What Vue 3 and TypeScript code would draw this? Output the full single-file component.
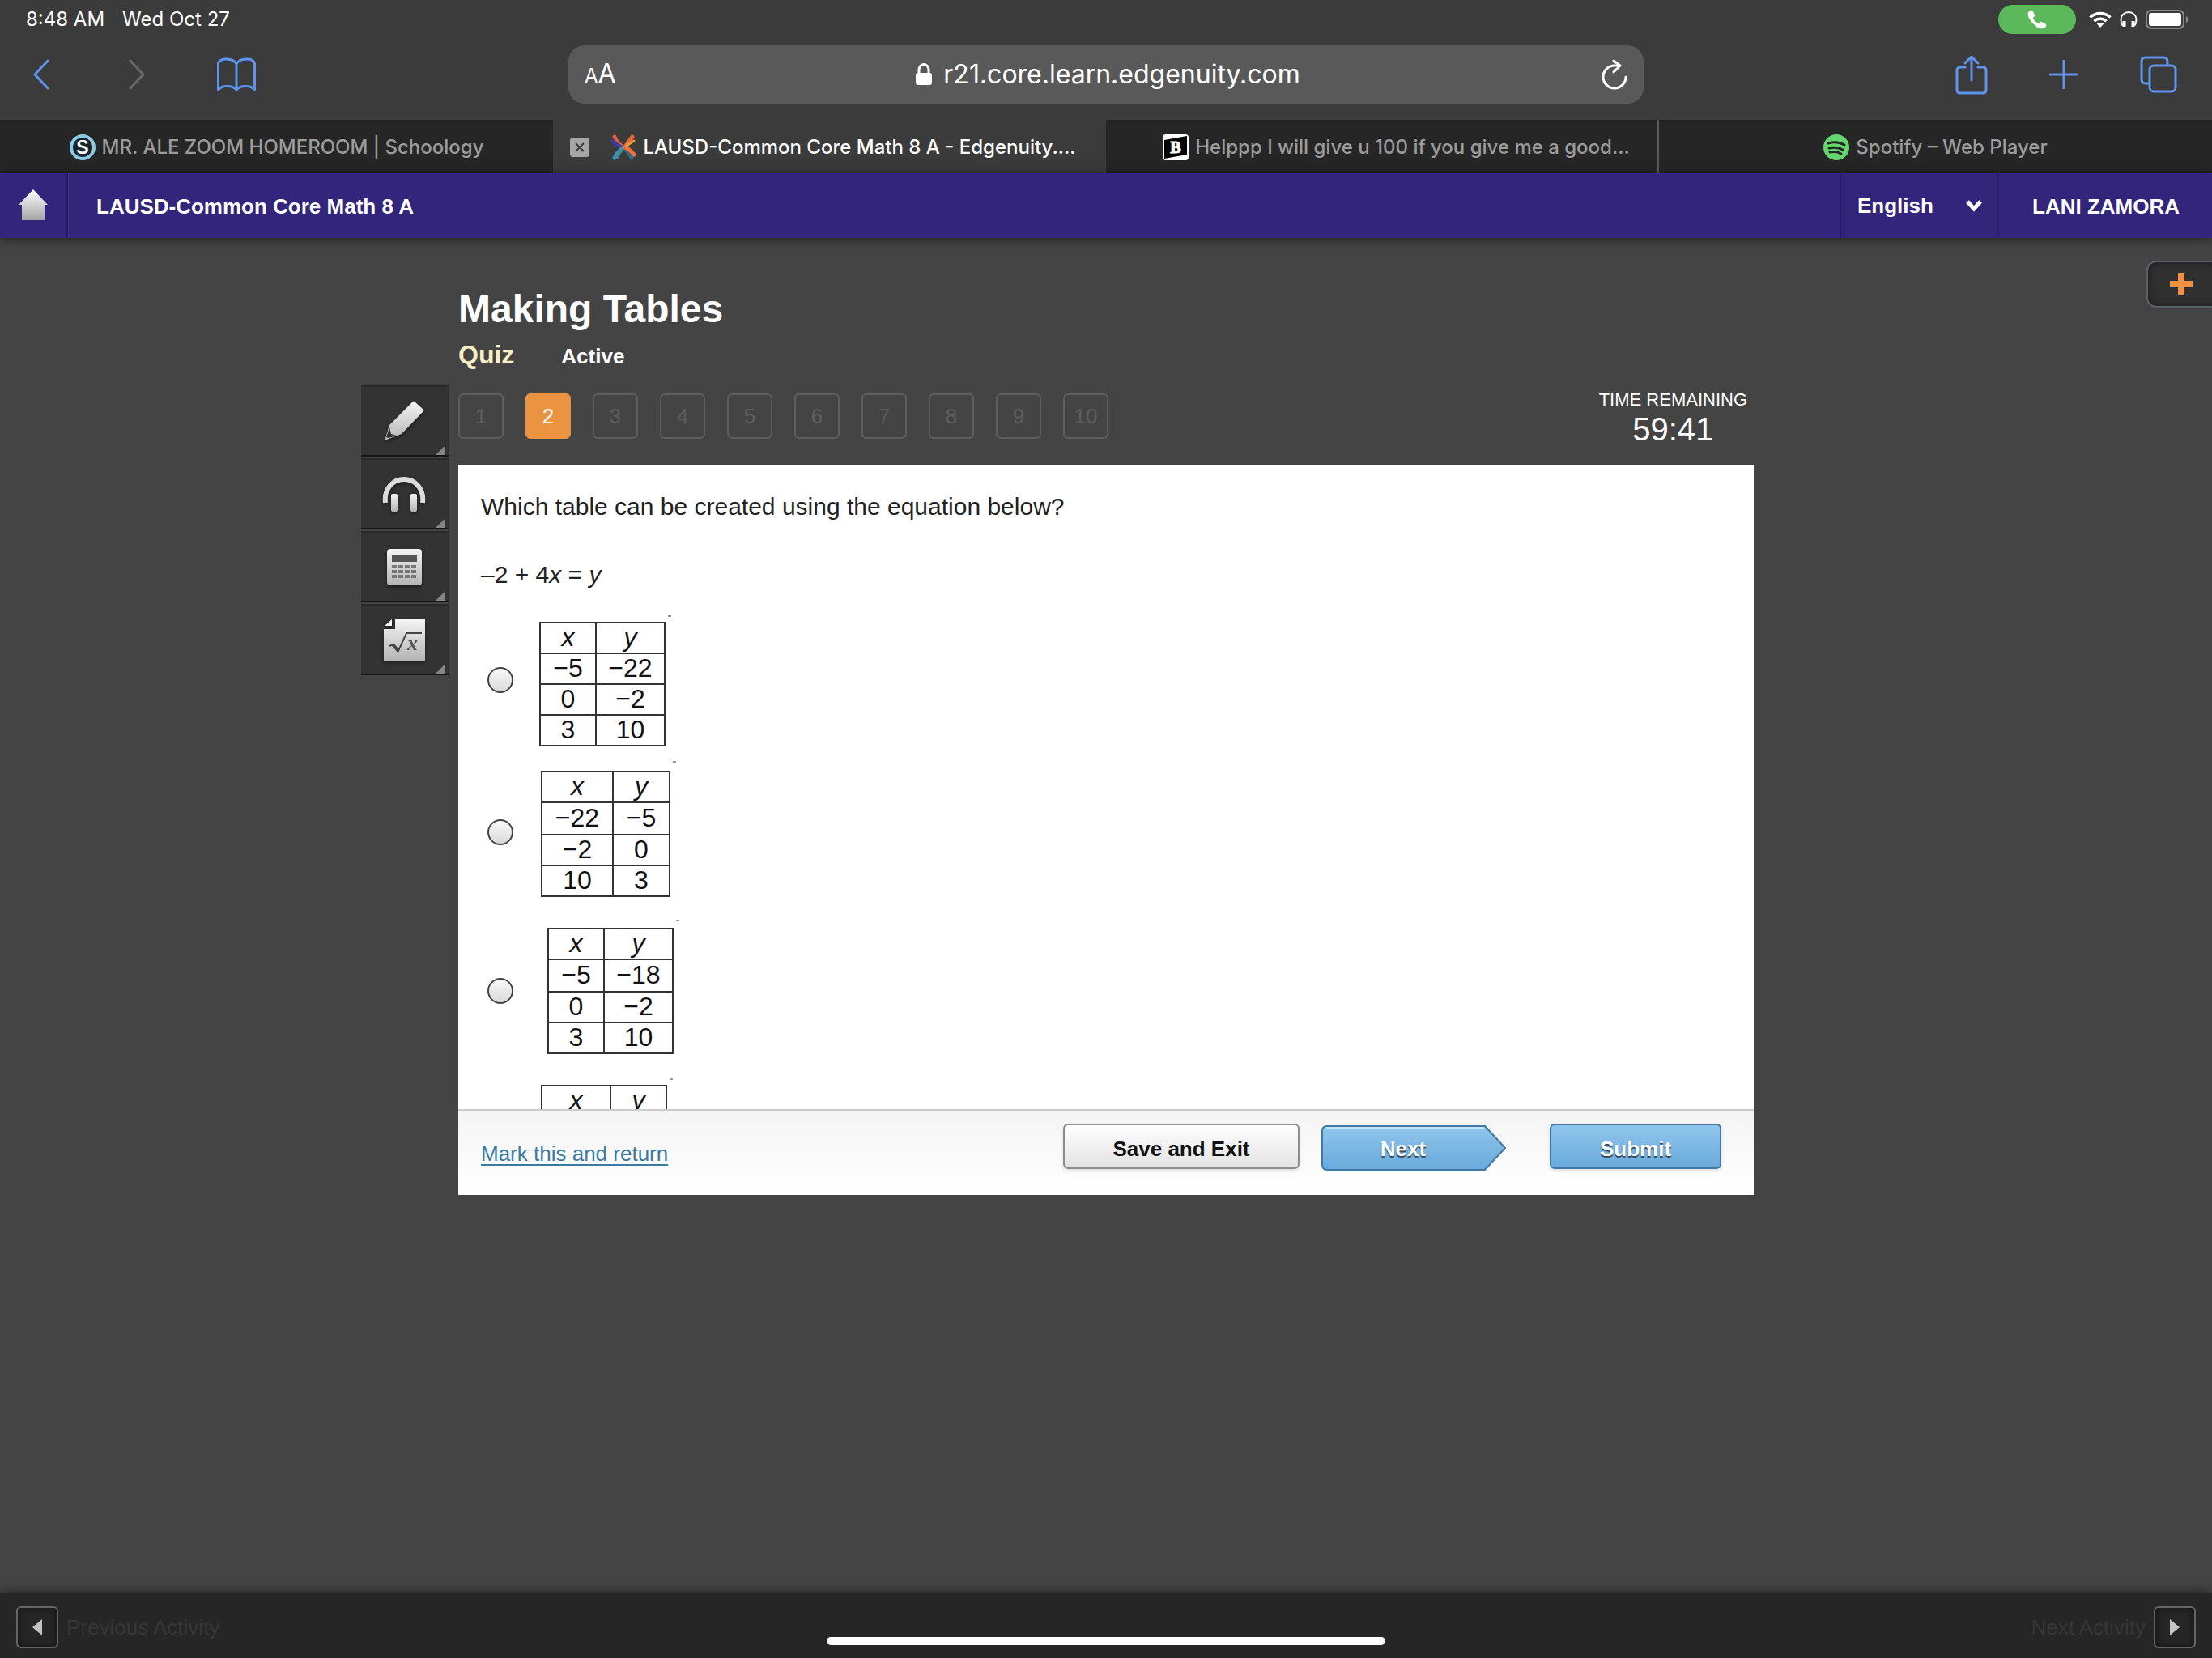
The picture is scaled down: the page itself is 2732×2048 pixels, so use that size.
<script setup lang="ts">
import { ref } from 'vue'

interface Option {
  id: string
  look: string
  head: [string, string]
  rows: [string, string][]
}

const address = ref('r21.core.learn.edgenuity.com')
const language = ref('English')
const answer = ref('')
const current = ref(2)
const questions = Array.from({ length: 10 }, (_, i) => i + 1)

const options: Option[] = [
  { id: 'a', look: 'first', head: ['x', 'y'], rows: [['−5', '−22'], ['0', '−2'], ['3', '10']] },
  { id: 'b', look: 'second', head: ['x', 'y'], rows: [['−22', '−5'], ['−2', '0'], ['10', '3']] },
  { id: 'c', look: 'third', head: ['x', 'y'], rows: [['−5', '−18'], ['0', '−2'], ['3', '10']] },
  { id: 'd', look: 'fourth', head: ['x', 'y'], rows: [] },
]
</script>

<template>
  <div class="screen">
    <header class="browser">
      <div class="status">
        <span>8:48 AM</span>
        <span>Wed Oct 27</span>
        <div class="status-icons">
          <span class="call">
            <svg width="24" height="24" viewBox="0 0 24 24"><path d="M2.500 1.500C4 .2 6 .6 7 2.500l1.600 3c.8 1.600.3 2.800-1.200 3.900-.7.600-.6 1.100 0 2 1.400 2.200 3 3.800 5.200 5.200.9.600 1.400.7 2 0 1.100-1.500 2.300-2 3.900-1.200l3 1.700c1.900 1 2.300 3 .9 4.400C19 25 13 23.500 7.500 17.500 1.500 11.500-1.500 5 2.500 1.500z" fill="#fff" /></svg>
          </span>
          <svg class="wifi" width="28" height="20" viewBox="0 0 28 20" fill="none" stroke="#fff" stroke-width="3.600"><path d="M1.500 7.500a18 18 0 0 1 25 0M6.500 12.200a11 11 0 0 1 15 0" /><path d="M14 20l-4.200-4.400a6 6 0 0 1 8.400 0z" fill="#fff" stroke="none" /></svg>
          <svg class="phones" width="22" height="20" viewBox="0 0 22 20" fill="none" stroke="#fff" stroke-width="2"><path d="M3.500 17.500C1.500 15 1.500 12 1.500 10a9.500 9 0 0 1 19 0c0 2 0 5-2 7.500" /><path d="M5.500 12v7M16.500 12v7" stroke-width="4" stroke-linecap="butt" /></svg>
          <svg width="54" height="24" viewBox="0 0 54 24"><rect x="1" y="1" width="46" height="22" rx="6" fill="none" stroke="#8a8a8a" stroke-width="2" /><rect x="4" y="4" width="40" height="16" rx="3" fill="#fff" /><path d="M50 8c3 1 3 7 0 8z" fill="#8a8a8a" /></svg>
        </div>
      </div>

      <div class="toolbar">
        <div class="side">
          <button class="tool back" type="button" aria-label="Back">
            <svg width="22" height="38" viewBox="0 0 22 38"><path d="M19 2L3 19l16 17" /></svg>
          </button>
          <button class="tool forward" type="button" aria-label="Forward">
            <svg width="22" height="38" viewBox="0 0 22 38"><path d="M3 2l16 17L3 36" /></svg>
          </button>
          <button class="tool" type="button" aria-label="Bookmarks">
            <svg width="48" height="42" viewBox="0 0 48 42"><path d="M24 40V8C20 .5 4 0 1.500 7v33c4-6 18-6 22.500 0 4.500-6 18.500-6 22.500 0V7C44 0 28 .5 24 8" /></svg>
          </button>
        </div>
        <div class="address">
          <button class="text-size" type="button" aria-label="Text size"><small>A</small>A</button>
          <div class="url">
            <svg width="20" height="28" viewBox="0 0 20 28"><rect x="0" y="12" width="20" height="15" rx="3" fill="#fff" /><path d="M4 13V8a6 6.500 0 0 1 12 0v5" fill="none" stroke="#fff" stroke-width="3" /></svg>
            <input v-model="address" type="text" aria-label="Address">
          </div>
          <button class="reload" type="button" aria-label="Reload">
            <svg width="32" height="38" viewBox="0 0 32 38" fill="none" stroke="#fff" stroke-width="3" stroke-linecap="round" stroke-linejoin="round"><path d="M30 22a14 14 0 1 1-14-14h6" /><path d="M15 2l8 6-8 8" /></svg>
          </button>
        </div>
        <div class="side end">
          <button class="tool" type="button" aria-label="Share">
            <svg width="40" height="50" viewBox="0 0 40 50"><path d="M12 16H6q-4 0-4 4v24q0 4 4 4h28q4 0 4-4V20q0-4-4-4h-6M20 32V3M12 11l8-8 8 8" /></svg>
          </button>
          <button class="tool" type="button" aria-label="New tab">
            <svg width="36" height="36" viewBox="0 0 36 36"><path d="M18 1v34M1 18h34" /></svg>
          </button>
          <button class="tool" type="button" aria-label="Show tabs">
            <svg width="46" height="46" viewBox="0 0 46 46"><path d="M11 34H7q-5 0-5-5V7q0-5 5-5h22q5 0 5 5v4" /><rect x="12" y="12" width="32" height="32" rx="5" /></svg>
          </button>
        </div>
      </div>

      <nav class="tabs">
        <a class="tab" href="#schoology">
          <svg width="32" height="32" viewBox="0 0 32 32"><circle cx="16" cy="16" r="14" fill="#18242b" stroke="#8ccbe8" stroke-width="4" /><text x="16" y="24" text-anchor="middle" font-family="Liberation Sans, sans-serif" font-weight="700" font-size="23" fill="#fff">S</text></svg>
          <span>MR. ALE ZOOM HOMEROOM | Schoology</span>
        </a>
        <div class="tab active">
          <button class="close" type="button" aria-label="Close tab">
            <svg width="12" height="12" viewBox="0 0 12 12"><path d="M1 1l10 10M11 1L1 11" stroke="#3b3b3b" stroke-width="2" /></svg>
          </button>
          <svg width="32" height="32" viewBox="0 0 32 32" fill="none" stroke-width="5" stroke-linecap="round">
            <path d="M5 3c3 8 6 9 11 13" stroke="#e0603c" /><path d="M3 8c4 5 7 6 12 9" stroke="#3c3a9c" />
            <path d="M16 16C11 20 8 23 5 29" stroke="#3f8fc0" /><path d="M15 19c-4 4-5 6-7 10" stroke="#3a8f8c" stroke-width="3" />
            <path d="M27 3c-4 6-7 10-10 14" stroke="#e8663c" /><path d="M29 8c-5 3-8 5-11 8" stroke="#f29a38" stroke-width="3" />
            <path d="M17 17c4 4 7 7 9 12" stroke="#2e6a80" /><path d="M18 16c5 2 8 5 11 9" stroke="#f07038" />
          </svg>
          <a href="#edgenuity">LAUSD-Common Core Math 8 A - Edgenuity....</a>
        </div>
        <a class="tab" href="#brainly">
          <svg width="32" height="32" viewBox="0 0 32 32"><rect width="32" height="32" rx="4" fill="#fff" /><path d="M2 7l28-5v23L2 30z" fill="#000" /><text x="16" y="23" text-anchor="middle" font-family="Liberation Serif, serif" font-weight="700" font-size="20" fill="#fff" stroke="#fff">B</text></svg>
          <span>Helppp I will give u 100 if you give me a good...</span>
        </a>
        <a class="tab" href="#spotify">
          <svg width="32" height="32" viewBox="0 0 32 32"><circle cx="16" cy="16" r="16" fill="#65d66e" /><path d="M6 11c7-2 14-1.500 20 2M7 17c6-1.500 12-1 17 2M8 22c5-1 9-1 14 2" fill="none" stroke="#262626" stroke-width="3" stroke-linecap="round" /></svg>
          <span>Spotify – Web Player</span>
        </a>
      </nav>
    </header>

    <div class="course">
      <a class="home" href="#home" aria-label="Home">
        <svg width="38" height="42" viewBox="0 0 38 42">
          <defs><linearGradient id="silver" x1="0" y1="0" x2="0" y2="1"><stop offset="0" stop-color="#fff" /><stop offset="1" stop-color="#a4a4a4" /></linearGradient></defs>
          <path d="M19 1L37 20h-4v19H5V20H1z" fill="url(#silver)" />
        </svg>
      </a>
      <strong class="course-name">LAUSD-Common Core Math 8 A</strong>
      <div class="language">
        <select v-model="language" aria-label="Language"><option>English</option></select>
        <svg width="20" height="16" viewBox="0 0 20 16"><path d="M2 3l8 9 8-9" fill="none" stroke="#fff" stroke-width="5" /></svg>
      </div>
      <a class="user" href="#account">LANI ZAMORA</a>
    </div>

    <button class="expand" type="button" aria-label="Expand">
      <svg width="28" height="28" viewBox="0 0 28 28"><path d="M10 0h8v10h10v8H18v10h-8V18H0v-8h10z" fill="#ee9242" /></svg>
    </button>

    <main class="lesson">
      <div class="tools">
        <button type="button" aria-label="Highlighter">
          <svg width="54" height="54" viewBox="0 0 54 54"><path d="M40 2l11 10q1 1 0 2L24 42 3 50 9 31 38 2q1-1 2 0z" fill="url(#tool-silver)" /><path d="M9 34l2 8 7 2-10 3-3-1z" fill="#333" /></svg>
        </button>
        <button type="button" aria-label="Read aloud">
          <svg width="54" height="54" viewBox="0 0 54 54"><path d="M4 37C2 20 13 8 27 8s25 12 23 29" fill="none" stroke="#dcdcdc" stroke-width="6" /><rect x="11" y="26" width="8" height="22" rx="2" fill="url(#tool-silver)" /><rect x="35" y="26" width="8" height="22" rx="2" fill="url(#tool-silver)" /></svg>
        </button>
        <button type="button" aria-label="Calculator">
          <svg width="54" height="54" viewBox="0 0 54 54"><rect x="6" y="4" width="43" height="45" rx="4" fill="url(#tool-silver)" /><path d="M12 11h31v9H12z" fill="#555" /><path d="M12 26h31M12 32h31M12 38h31" stroke="#777" stroke-width="4" stroke-dasharray="6 2" /></svg>
        </button>
        <button type="button" aria-label="Formula sheet">
          <svg width="54" height="54" viewBox="0 0 54 54">
            <defs><linearGradient id="tool-silver" x1="0" y1="0" x2="0" y2="1"><stop offset="0" stop-color="#f4f4f4" /><stop offset="1" stop-color="#b4b4b4" /></linearGradient></defs>
            <path d="M16 1h37v51H2V13h14z" fill="url(#tool-silver)" /><path d="M3 9l9-8v8z" fill="#f4f4f4" />
            <path d="M9 34l4-2 7 8 10-22h19" fill="none" stroke="#444" stroke-width="2" /><path d="M13 32l7 8" stroke="#444" stroke-width="4" />
            <text x="31" y="39" font-family="Liberation Serif, serif" font-style="italic" font-weight="700" font-size="26" fill="#555">x</text>
          </svg>
        </button>
      </div>

      <div class="quiz">
        <h1>Making Tables</h1>
        <div class="state"><b class="kind">Quiz</b><b>Active</b></div>
        <div class="progress">
          <div class="numbers">
            <button v-for="n in questions" :key="n" type="button" :class="{ on: n === current }" @click="current = n">{{ n }}</button>
          </div>
          <div class="timer"><span>TIME REMAINING</span><b>59:41</b></div>
        </div>

        <section class="panel">
          <div class="content">
            <p>Which table can be created using the equation below?</p>
            <p class="formula">–2 + 4<i>x</i> = <i>y</i></p>
            <div class="options">
              <div v-for="o in options" :key="o.id" class="option" :class="o.look">
                <input v-model="answer" type="radio" name="answer" :value="o.id" :aria-labelledby="'table-' + o.id">
                <div class="figure">
                  <table :id="'table-' + o.id">
                    <thead><tr><th v-for="h in o.head" :key="h">{{ h }}</th></tr></thead>
                    <tbody><tr v-for="r in o.rows" :key="r[0]"><td v-for="(c, i) in r" :key="i">{{ c }}</td></tr></tbody>
                  </table>
                </div>
              </div>
            </div>
          </div>
          <footer class="actions">
            <a href="#mark">Mark this and return</a>
            <button class="btn save" type="button">Save and Exit</button>
            <button class="next" type="button">
              <svg width="228" height="56" viewBox="0 0 228 56">
                <defs><linearGradient id="sky" x1="0" y1="0" x2="0" y2="1"><stop offset="0" stop-color="#90c6ec" /><stop offset="1" stop-color="#69a9da" /></linearGradient></defs>
                <path d="M7 1h195l25 27-25 27H7q-6 0-6-6V7q0-6 6-6z" fill="url(#sky)" stroke="#4478a4" stroke-width="2" />
                <path d="M6 3h195" stroke="#c0e4fa" stroke-width="2" />
              </svg>
              <span>Next</span>
            </button>
            <button class="btn submit" type="button">Submit</button>
          </footer>
        </section>
      </div>
    </main>

    <footer class="bottom">
      <button type="button" aria-label="Previous"><svg width="12" height="20" viewBox="0 0 12 20"><path d="M12 0v20L0 10z" fill="#c4c4c4" /></svg></button>
      <span>Previous Activity</span>
      <span class="to-end">Next Activity</span>
      <button type="button" aria-label="Next"><svg width="12" height="20" viewBox="0 0 12 20"><path d="M0 0v20l12-10z" fill="#c4c4c4" /></svg></button>
      <i class="indicator"></i>
    </footer>
  </div>
</template>

<style>
body { margin: 0; background: #444; }
</style>

<style scoped>
* { box-sizing: border-box; }
svg { display: block; flex: none; }
button { padding: 0; border: 0; background: none; color: inherit; font: inherit; cursor: pointer; }
a { color: inherit; text-decoration: none; }
.screen { position: relative; display: flex; flex-direction: column; min-height: 100vh; overflow: hidden; background: #444; color: #fff; font: 26px/32px "Liberation Sans", Arial, sans-serif; }

.browser { background: #3b3b3b; font-family: Inter, Roboto, sans-serif; }
.status { display: flex; align-items: center; gap: 22px; height: 48px; padding: 0 28px 0 32px; font-size: 24px; }
.status-icons { display: flex; align-items: center; margin-left: auto; }
.call { display: flex; align-items: center; justify-content: center; width: 96px; height: 36px; border-radius: 18px; background: #5bb95b; }
.wifi { margin-left: 16px; }
.phones { margin: 0 10px; }
.toolbar { display: flex; justify-content: space-between; height: 100px; padding: 8px 40px; }
.side { display: flex; align-items: center; gap: 88px; width: 662px; height: 72px; }
.side .back { margin-right: 8px; }
.side.end { justify-content: flex-end; gap: 76px; padding-right: 3px; }
.tool svg { fill: none; stroke: #5e94ec; stroke-width: 3; stroke-linecap: round; stroke-linejoin: round; }
.tool.forward svg { stroke: #6a6a6a; }
.address { display: flex; align-items: center; justify-content: space-between; flex: 1; height: 72px; padding: 0 20px; border-radius: 20px; background: #595959; }
.text-size { font-size: 32px; }
.text-size small { font-size: 24px; }
.url { display: flex; align-items: center; gap: 14px; }
.url input { width: 442px; padding: 0; border: 0; outline: 0; background: none; color: #fff; font: 32px/40px Inter, Roboto, sans-serif; }
.tabs { display: grid; grid-template-columns: repeat(4, 1fr); height: 66px; background: #262626; color: #9c9c9c; font-size: 24px; font-weight: 500; }
.tab { position: relative; display: flex; align-items: center; justify-content: center; gap: 8px; padding-top: 2px; white-space: nowrap; }
.tab:nth-child(3) { padding-left: 36px; border-right: 2px solid #5a5a5a; }
.tab.active { background: #3b3b3b; color: #fff; padding-left: 34px; }
.close { position: absolute; left: 21px; top: 22px; display: flex; align-items: center; justify-content: center; width: 24px; height: 24px; border-radius: 4px; background: #a6a6a6; }

.course { position: relative; z-index: 1; display: flex; align-items: stretch; height: 80px; background: #33257c; box-shadow: 0 2px 12px rgba(0, 0, 0, .5); font-weight: 700; line-height: 82px; }
.home { display: flex; align-items: center; justify-content: center; width: 84px; border-right: 2px solid #27195f; }
.course-name { padding-left: 34px; border-left: 1px solid #43358c; }
.language { display: flex; align-items: center; justify-content: space-between; width: 196px; margin-left: auto; padding: 0 18px 0 20px; border-left: 2px solid #27195f; border-right: 2px solid #27195f; }
.language select { appearance: none; padding: 0; border: 0; background: none; color: #fff; font: inherit; line-height: 40px; }
.user { padding: 0 40px 0 42px; }

.expand { position: absolute; top: 322px; right: -12px; display: flex; align-items: center; padding-left: 27px; width: 93px; height: 58px; border: 2px solid #59606c; border-radius: 12px; background: #303030; box-shadow: inset 0 0 10px #1c1c1c; }

.lesson { display: flex; justify-content: center; gap: 12px; padding: 60px 120px 40px 0; }
.tools { display: flex; flex-direction: column; gap: 2px; width: 108px; padding-top: 122px; }
.tools button { position: relative; display: flex; align-items: center; justify-content: center; height: 88px; padding: 2px 2px 0 0; border-top: 2px solid #2a2a2a; border-bottom: 2px solid #141414; background: #333; }
.tools svg { filter: drop-shadow(0 2px 2px #1a1a1a); }
.tools button::after { content: ""; position: absolute; right: 4px; bottom: 0; border: solid transparent; border-width: 0 0 12px 12px; border-bottom-color: #868686; }
.quiz { flex: 0 1 1600px; }
h1 { margin: 0; font-size: 48px; line-height: 56px; }
.state { display: flex; align-items: baseline; gap: 58px; height: 48px; padding-top: 10px; line-height: 36px; }
.kind { color: #f9eec4; font-size: 32px; }
.progress { display: flex; justify-content: space-between; padding: 28px 8px 32px 0; }
.numbers { display: flex; gap: 27px; }
.numbers button { width: 56px; height: 56px; border: 2px solid #5e5e5e; border-radius: 6px; color: #5e5e5e; }
.numbers button.on { border-color: #ea9340; background: #ea9340; color: #fff; }
.timer { display: flex; flex-direction: column; align-items: center; height: 56px; margin-top: -7px; font-size: 22px; line-height: 30px; }
.timer b { font-size: 40px; font-weight: 400; line-height: 42px; }

.panel { background: #fff; color: #222; }
.content { height: 796px; padding: 36px 28px 0; overflow: hidden; }
p { margin: 0; font-size: 30px; }
.formula { margin: 52px 0 32px; }
.options { display: flex; flex-direction: column; gap: 16px; padding-left: 8px; }
.option { display: flex; align-items: center; }
.option input { appearance: none; flex: none; width: 32px; height: 32px; margin: 0; border: 2px solid #444; border-radius: 50%; background: linear-gradient(#fafafa, #d8d8d8); }
.option input:checked { background: radial-gradient(#333 36%, #eee 40%); }
.figure { position: relative; margin-left: 34px; padding: 12px 0; }
.figure::after { content: ""; position: absolute; top: 2px; right: -7px; width: 4px; height: 2px; background: #999; }
.first .figure { margin-left: 32px; padding: 10px 0 0; }
.second .figure { padding: 14px 0 10px; }
.third .figure { margin-left: 42px; }
.fourth input { visibility: hidden; }
.fourth .figure { padding-top: 10px; }
table { border-collapse: collapse; width: 156px; color: #111; font-size: 32px; line-height: 32px; text-align: center; table-layout: fixed; }
th, td { height: 38px; padding: 0 0 3px; border: 2px solid #333; }
.second tr:first-child td, .third tr:first-child td { height: 40px; }
th { font-weight: 400; font-style: italic; }
th:first-child { width: 69px; }
.second table { width: 160px; }
.second th:first-child { width: 88px; }
.fourth th:first-child { width: 85px; }

.actions { display: flex; align-items: flex-start; height: 106px; padding: 16px 40px 0 28px; border-top: 2px solid #ccc; background: linear-gradient(#f4f4f4, #fff); font-weight: 700; }
.actions a { margin: 21px auto 0 0; color: #3a7ba4; font-weight: 400; text-decoration: underline; text-underline-offset: 4px; }
.btn { height: 56px; border-radius: 6px; padding-top: 5px; box-shadow: 0 2px 4px rgba(0, 0, 0, .12); }
.save { width: 292px; border: 2px solid #8c8c8c; background: linear-gradient(#fff, #e2e2e2); color: #111; }
.next { position: relative; margin: 2px 54px 0 27px; color: #fff; }
.next span { position: absolute; top: 13px; left: 0; width: 202px; text-shadow: 0 2px 1px #345; }
.submit { width: 212px; border: 2px solid #4478a4; background: linear-gradient(#90c6ec, #69a9da); color: #fff; text-shadow: 0 2px 1px #345; }

.bottom { position: relative; display: flex; align-items: center; gap: 10px; height: 80px; margin-top: auto; padding: 4px 20px 0; background: #262626; box-shadow: 0 0 14px rgba(0, 0, 0, .6); color: #363636; }
.bottom button { display: flex; align-items: center; justify-content: center; width: 52px; height: 52px; border: 2px solid #666; border-radius: 6px; box-shadow: inset 0 0 10px #111; }
.to-end { margin-left: auto; }
.indicator { position: absolute; left: 50%; bottom: 16px; width: 690px; height: 10px; margin-left: -345px; border-radius: 5px; background: #fff; }
</style>
